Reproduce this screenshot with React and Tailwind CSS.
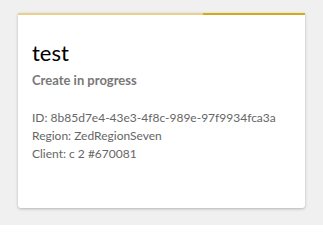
import React from 'react';

const Card = ({ name, status, id, region, client }) => {
  return (
    <div className="w-[287px] bg-white rounded-b-[3px] shadow-[0_1px_3px_rgba(0,0,0,0.25)]">
      {/* progreso */}
      <div className="flex h-[2px]">
        <div className="w-[185px] bg-[#ead08a]" />
        <div className="flex-1 bg-[#d6a918]" />
      </div>
      <div className="px-[14px] pt-[24px] pb-[45px]">
        <div className="text-[22px] leading-[28px] text-black">{name}</div>
        <div className="mt-[5px] text-[13px] leading-[16px] font-bold text-[#787878]">{status}</div>
        <div className="mt-[21px] text-[12px] leading-[18px] text-[#666]">
          <div>ID: {id}</div>
          <div>Region: {region}</div>
          <div>Client: {client}</div>
        </div>
      </div>
    </div>
  );
};

export default function App() {
  return (
    <div className="w-[323px] h-[225px] bg-[#f0f0f0] pt-[13px] pl-[18px]" style={{ fontFamily: 'Lato, "Open Sans", sans-serif' }}>
      <Card
        name="test"
        status="Create in progress"
        id="8b85d7e4-43e3-4f8c-989e-97f9934fca3a"
        region="ZedRegionSeven"
        client="c 2 #670081"
      />
    </div>
  );
}
